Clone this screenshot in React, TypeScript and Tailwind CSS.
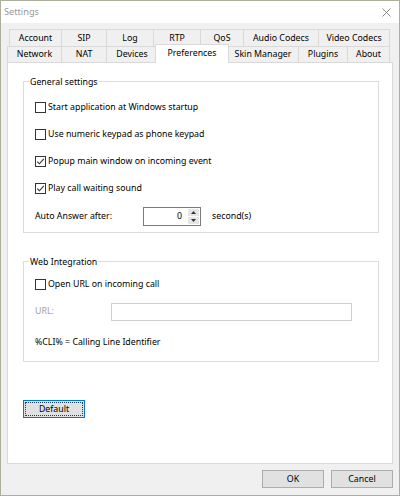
import React from "react";

const font = { fontFamily: '"Noto Sans", "Liberation Sans", sans-serif' };

const topRow = [
  { label: "Account", w: "w-[52px]" },
  { label: "SIP", w: "w-[45px]" },
  { label: "Log", w: "w-[47px]" },
  { label: "RTP", w: "w-[47px]" },
  { label: "QoS", w: "w-[43px]" },
  { label: "Audio Codecs", w: "w-[75px]" },
  { label: "Video Codecs", w: "w-[72px]" },
];

const bottomRow = [
  { label: "Network", w: "w-[54px]" },
  { label: "NAT", w: "w-[45px]" },
  { label: "Devices", w: "w-[51px]" },
  { label: "Preferences", w: "w-[74px]", selected: true },
  { label: "Skin Manager", w: "w-[71px]" },
  { label: "Plugins", w: "w-[49px]" },
  { label: "About", w: "w-[43px]" },
];

function Tab({ label, w, selected, last }: { label: string; w: string; selected?: boolean; last?: boolean }) {
  if (selected) {
    return (
      <div
        className={`${w} relative z-10 -mx-[2px] -mb-[1px] flex h-[19px] items-start justify-center border-x border-t border-[#d9d9d9] bg-white pt-[4px]`}
      >
        {label}
      </div>
    );
  }
  return (
    <div
      className={`${w} flex h-full items-center justify-center border-l border-t border-[#d9d9d9] bg-[#f0f0f0] ${last ? "border-r" : ""}`}
    >
      {label}
    </div>
  );
}

function Checkbox({ label, checked }: { label: string; checked?: boolean }) {
  return (
    <div className="flex items-center gap-[2px]">
      <div className="h-[11px] w-[11px] border border-[#333] bg-white">
        {checked && (
          <svg viewBox="0 0 9 9" className="h-[9px] w-[9px]">
            <path d="M1.3 4.6 L3.4 6.8 L7.8 1.8" fill="none" stroke="#333" strokeWidth="1.1" />
          </svg>
        )}
      </div>
      <span>{label}</span>
    </div>
  );
}

function Group({ title, className, children }: { title: string; className: string; children: React.ReactNode }) {
  return (
    <div className={`relative ml-[15px] w-[356px] border border-[#dcdcdc] pl-[11px] ${className}`}>
      <span className="absolute left-[5px] top-[-7px] bg-white px-[1px] leading-[14px]">{title}</span>
      {children}
    </div>
  );
}

function Button({ label }: { label: string }) {
  return (
    <div className="flex h-[18px] w-[62px] items-center justify-center border border-[#adadad] bg-[#e1e1e1]">
      {label}
    </div>
  );
}

export default function App() {
  return (
    <div
      style={font}
      className="flex h-[496px] w-[400px] flex-col border border-[#aab09c] bg-[#f0f0f0] text-[8.8px] leading-none text-black"
    >
      {/* title bar */}
      <div className="flex h-[22px] items-center justify-between bg-white pl-[3px] pr-[8px]">
        <span className="text-[9.2px] text-[#999]">Settings</span>
        <svg viewBox="0 0 9 9" className="h-[9px] w-[9px]">
          <path d="M0.5 0.5 L8.5 8.5 M8.5 0.5 L0.5 8.5" stroke="#808080" strokeWidth="0.9" />
        </svg>
      </div>

      {/* tab control */}
      <div className="flex flex-1 flex-col px-[6px] pt-[6px]">
        <div className="ml-[2px] flex h-[17px]">
          {topRow.map((t, i) => (
            <Tab key={t.label} label={t.label} w={t.w} last={i === topRow.length - 1} />
          ))}
        </div>
        <div className="flex h-[16px] items-end">
          {bottomRow.map((t, i) => (
            <Tab key={t.label} label={t.label} w={t.w} selected={t.selected} last={i === bottomRow.length - 1} />
          ))}
        </div>

        <div className="flex flex-1 flex-col border border-[#d9d9d9] bg-white">
          <Group title="General settings" className="mt-[18px] pb-[2px] pt-[12px]">
            <div className="flex h-[27px] items-center">
              <Checkbox label="Start application at Windows startup" />
            </div>
            <div className="flex h-[27px] items-center">
              <Checkbox label="Use numeric keypad as phone keypad" />
            </div>
            <div className="flex h-[27px] items-center">
              <Checkbox label="Popup main window on incoming event" checked />
            </div>
            <div className="flex h-[27px] items-center">
              <Checkbox label="Play call waiting sound" checked />
            </div>
            <div className="flex h-[28px] items-center">
              <span className="w-[108px]">Auto Answer after:</span>
              <div className="flex h-[19px] w-[58px] border border-[#7a7a7a] bg-white">
                <div className="flex flex-1 items-center justify-end pr-[5px]">0</div>
                <div className="flex w-[13px] flex-col gap-[1px] p-[1px]">
                  <div className="flex flex-1 items-center justify-center bg-[#e6e6e6]">
                    <svg viewBox="0 0 5 3" className="h-[3px] w-[5px]">
                      <path d="M0 3 L2.5 0 L5 3 Z" fill="#333" />
                    </svg>
                  </div>
                  <div className="flex flex-1 items-center justify-center bg-[#e6e6e6]">
                    <svg viewBox="0 0 5 3" className="h-[3px] w-[5px]">
                      <path d="M0 0 L2.5 3 L5 0 Z" fill="#333" />
                    </svg>
                  </div>
                </div>
              </div>
              <span className="ml-[11px]">second(s)</span>
            </div>
          </Group>

          <Group title="Web Integration" className="mt-[28px] pb-[2px] pt-[9px]">
            <div className="flex h-[27px] items-center">
              <Checkbox label="Open URL on incoming call" />
            </div>
            <div className="flex h-[27px] items-center">
              <span className="w-[76px] text-[#a0a0a0]">URL:</span>
              <div className="h-[18px] w-[241px] border border-[#cfcfcf] bg-white" />
            </div>
            <div className="flex h-[34px] items-center">%CLI% = Calling Line Identifier</div>
          </Group>

          <div className="ml-[15px] mt-[38px] flex h-[18px] w-[62px] border border-[#0078d7] bg-[#e1e1e1] p-[1px]">
            <div className="flex flex-1 items-center justify-center border border-dotted border-[#1c3f66]">
              Default
            </div>
          </div>
        </div>
      </div>

      {/* footer */}
      <div className="flex h-[31px] items-start justify-end gap-[7px] px-[6px] pt-[6px]">
        <Button label="OK" />
        <Button label="Cancel" />
      </div>
    </div>
  );
}
